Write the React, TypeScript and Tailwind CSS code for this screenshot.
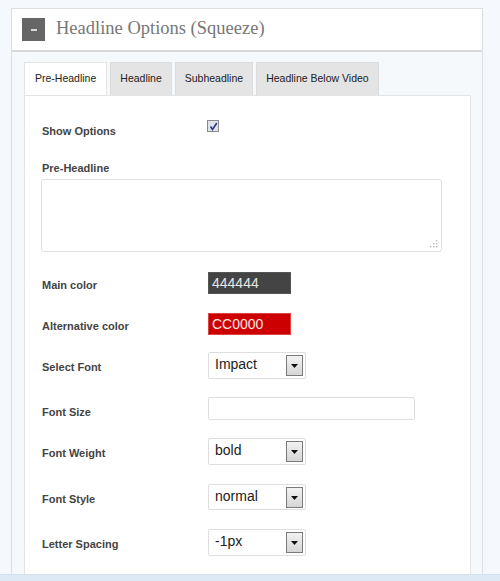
import { Fragment } from 'react'

const tabs = ['Pre-Headline', 'Headline', 'Subheadline', 'Headline Below Video']

const selects = [
  { label: 'Font Weight', value: 'bold', mt: 'mt-[18px]', h: 'h-[27px]' },
  { label: 'Font Style', value: 'normal', mt: 'mt-[19px]', h: 'h-[26px]' },
  { label: 'Letter Spacing', value: '-1px', mt: 'mt-[19px]', h: 'h-[27px]' },
]

function Label({ children }: { children: string }) {
  return (
    <div className="w-[167px] shrink-0 pt-[3px] pl-[1px] text-[11px] leading-[14px] font-bold text-[#444]">{children}</div>
  )
}

function Select({ value, h }: { value: string; h: string }) {
  return (
    <div className={`flex w-[98px] ${h} items-start justify-between rounded-[2px] border border-[#dedede] bg-white pl-[6px] pr-[2px]`}>
      <span className="pt-[2px] text-[14px] leading-[18px] text-[#222]">{value}</span>
      <span className="mt-[2px] flex h-[21px] w-[17px] items-center justify-center border border-[#7a7a7a] bg-gradient-to-b from-[#f2f2f2] to-[#d6d6d6]">
        <svg width="7" height="4" viewBox="0 0 7 4"><path d="M0 0h7L3.5 4z" fill="#111" /></svg>
      </span>
    </div>
  )
}

export default function App() {
  return (
    <div className="flex h-[581px] w-[500px] flex-col overflow-hidden bg-[#f5f9fd] font-['Liberation_Sans',Arial,sans-serif]">
      <div className="flex-1 overflow-hidden pt-[8px] pl-[11px]">
        <div className="h-full w-[472px] border border-b-0 border-[#dcdfe2] bg-[#f6f9fc]">
          {/* header */}
          <div className="flex h-[43px] items-center gap-[11px] border-b-2 border-[#d6d8da] bg-white pl-[10px]">
            <div className="flex h-[23px] w-[23px] items-center justify-center bg-[#666]">
              <div className="h-[2px] w-[6px] bg-[#d8d8d8]" />
            </div>
            <h2 className="pb-[1px] font-['Liberation_Serif','Times_New_Roman',serif] text-[18.5px] text-[#777]">
              Headline Options (Squeeze)
            </h2>
          </div>

          {/* tabs */}
          <div className="flex gap-[3px] pt-[10px] pl-[12px]">
            {tabs.map((t, i) => (
              <div key={t}
                className={`flex h-[33px] items-center whitespace-nowrap text-[10.5px] text-[#222] ${i === 0 ? 'z-10 -mb-px border border-b-0 border-[#e4e4e4] bg-white px-[10px]' : 'border border-b-0 border-[#dcdcdc] bg-[#e4e4e4] px-[9px]'}`}>
                {t}
              </div>
            ))}
          </div>

          {/* panel */}
          <div className="ml-[12px] h-full w-[447px] border border-[#e4e4e4] bg-white pt-[23px] pl-[16px]">
            <div className="flex h-[16px] items-start">
              <div className="w-[167px] shrink-0 pt-[5px] pl-[1px] text-[11px] leading-[14px] font-bold text-[#444]">Show Options</div>
              <span className="mt-[1px] -ml-[1px] flex h-[12px] w-[12px] items-center justify-center border border-[#8a8a8a] bg-[#dfe3ee]">
                <svg width="9" height="9" viewBox="0 0 9 9"><path d="M1.5 4.5l2 3L7.8 1" fill="none" stroke="#2b3b80" strokeWidth="1.6" /></svg>
              </span>
            </div>

            <div className="mt-[26px] pl-[1px] text-[11px] leading-[14px] font-bold text-[#444]">Pre-Headline</div>
            <div className="relative mt-[4px] h-[73px] w-[401px] rounded-[3px] border border-[#e0e0e0]">
              <svg className="absolute right-[3px] bottom-[3px]" width="8" height="8" viewBox="0 0 8 8" fill="#b8b8b8">
                <rect x="6" y="0" width="1.4" height="1.4" />
                <rect x="3" y="3" width="1.4" height="1.4" /><rect x="6" y="3" width="1.4" height="1.4" />
                <rect x="0" y="6" width="1.4" height="1.4" /><rect x="3" y="6" width="1.4" height="1.4" /><rect x="6" y="6" width="1.4" height="1.4" />
              </svg>
            </div>

            <div className="mt-[20px] flex h-[22px] items-center">
              <Label>Main color</Label>
              <div className="flex h-[22px] w-[83px] items-center border border-[#555] bg-[#444] pl-[3px] text-[14px] text-[#e6e6e6]">444444</div>
            </div>

            <div className="mt-[19px] flex h-[22px] items-center">
              <Label>Alternative color</Label>
              <div className="flex h-[22px] w-[83px] items-center border border-[#d44] bg-[#cc0000] pl-[3px] text-[14px] text-[#fbe6e6]">CC0000</div>
            </div>

            <div className="mt-[17px] flex h-[27px] items-center">
              <Label>Select Font</Label>
              <Select value="Impact" h="h-[27px]" />
            </div>

            <div className="mt-[18px] flex h-[23px] items-center">
              <div className="w-[167px] shrink-0 pt-[7px] pl-[1px] text-[11px] leading-[14px] font-bold text-[#444]">Font Size</div>
              <div className="h-[23px] w-[207px] rounded-[2px] border border-[#dedede] bg-white" />
            </div>

            {selects.map(s => (
              <Fragment key={s.label}>
                <div className={`${s.mt} flex ${s.h} items-center`}>
                  <Label>{s.label}</Label>
                  <Select value={s.value} h={s.h} />
                </div>
              </Fragment>
            ))}
          </div>
        </div>
      </div>
      <div className="h-[7px] border-t border-[#d2e0ee] bg-[#dde9f5]" />
    </div>
  )
}
